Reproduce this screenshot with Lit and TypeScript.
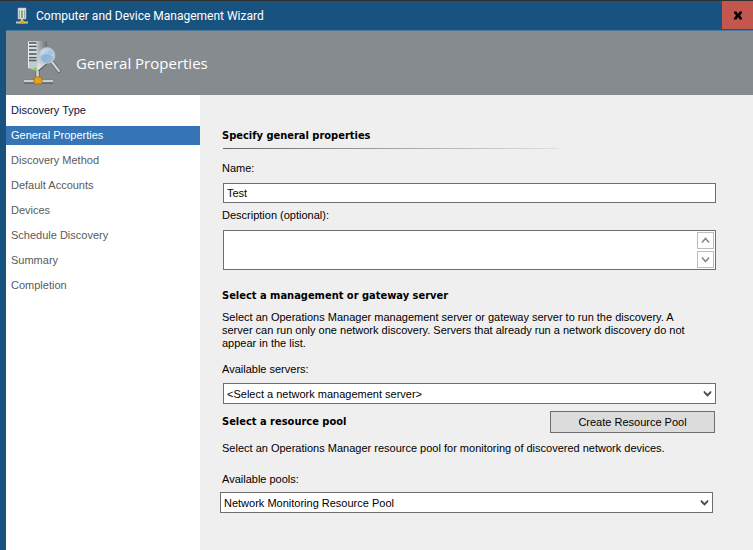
import { LitElement, html, css, svg } from "lit";
import { customElement, state } from "lit/decorators.js";

const steps = [
  "Discovery Type",
  "General Properties",
  "Discovery Method",
  "Default Accounts",
  "Devices",
  "Schedule Discovery",
  "Summary",
  "Completion",
];

const chevron = svg`<path d="M1 2v2l3.500 3.500L8 4V2L4.500 5z" fill="#505050" stroke="#505050" stroke-width=".5"/>`;

@customElement("app-root")
export class AppRoot extends LitElement {
  @state() private current = 1;

  static styles = css`
    :host {
      display: flex;
      flex-direction: column;
      min-height: 100vh;
      box-sizing: border-box;
      background: #18527f;
      color: #000;
      font: 11px/16px "Liberation Sans", Arial, sans-serif;
    }
    *, *::before { box-sizing: border-box; }
    .titlebar {
      display: flex;
      height: 30px;
      border-top: 1px solid #30302f;
    }
    .caption {
      display: flex;
      flex: 1;
      align-items: center;
      gap: 7px;
      padding-left: 14px;
      color: #fff;
      font: 12px/16px Roboto, sans-serif;
    }
    .close {
      display: grid;
      place-items: center;
      width: 32px;
      padding: 0;
      border: 0;
      border-left: 1px solid #5b3c48;
      border-bottom: 1px solid #5b3c48;
      background: #c3574e;
    }
    .window {
      display: flex;
      flex: 1;
      flex-direction: column;
      margin-left: 6px;
      border-top: 1px solid #4c779b;
    }
    .banner {
      display: flex;
      align-items: center;
      gap: 12px;
      height: 64px;
      padding-left: 14px;
      background: #868b8f;
      color: #fff;
    }
    .banner h1 {
      margin: 0;
      font: 15px/24px "Open Sans", sans-serif;
    }
    .columns { display: flex; flex: 1; }
    nav {
      display: flex;
      flex-direction: column;
      gap: 6px;
      width: 194px;
      padding-top: 6px;
      background: #fff;
    }
    nav a {
      padding-left: 5px;
      line-height: 19px;
      color: #5a5a5a;
      text-decoration: none;
    }
    nav a.done { color: #10103c; }
    nav a.current { background: #3575b5; color: #fff; }
    form {
      flex: 1;
      min-width: 0;
      padding: 33px 37px 32px 22px;
      background: #efefef;
    }
    h2 {
      margin: 0;
      font: bold 11px/16px "DejaVu Sans Condensed", "DejaVu Sans", sans-serif;
    }
    .rule {
      width: 68%;
      height: 1px;
      margin: 4px 0 11px 1px;
      background: linear-gradient(90deg, #666, #e0e0e0);
    }
    label { display: block; }
    p { margin: 0; }
    .name-label { margin-bottom: 7px; }
    .box {
      width: 100%;
      border: 1px solid #6e6e70;
      border-radius: 0;
      background: #fff;
      color: #000;
      font: inherit;
      outline: 0;
    }
    .field { display: flex; margin-left: 1px; }
    .name { height: 20px; padding: 0 3px; }
    .description-label { margin: 4px 0 7px; }
    .memo { display: flex; height: 40px; padding: 1px; }
    .memo textarea {
      flex: 1;
      min-width: 0;
      padding: 2px;
      border: 0;
      outline: 0;
      background: none;
      font: inherit;
      resize: none;
      overflow: hidden;
    }
    .spin {
      display: flex;
      flex-direction: column;
      justify-content: space-between;
      width: 17px;
    }
    .spin button {
      display: grid;
      place-items: center;
      height: 17px;
      padding: 0;
      border: 1px solid #bdbdbd;
      background: #fff;
    }
    .server-heading { margin: 18px 0 7px; }
    .server-text { max-width: 484px; line-height: 13px; }
    .servers-label { margin: 11px 0 6px; }
    .combo { display: grid; flex: 1; align-items: center; }
    .combo select {
      grid-area: 1 / 1;
      height: 21px;
      padding: 0 20px 0 3px;
      appearance: none;
    }
    .combo svg {
      grid-area: 1 / 1;
      justify-self: end;
      margin-right: 4px;
      pointer-events: none;
    }
    .pool-row {
      display: flex;
      align-items: center;
      justify-content: space-between;
      margin: 7px 1px 7px 0;
    }
    .create {
      width: 165px;
      height: 22px;
      padding: 0;
      border: 1px solid #6e6e70;
      background: #dcdcdc;
      color: #000;
      font: inherit;
    }
    .pools-label { margin: 15px 0 5px; }
    .pools { margin: 0 3px 0 -2px; }
  `;

  private combo(id: string, text: string) {
    return html`<div class="combo">
      <select class="box" id=${id}><option>${text}</option></select>
      <svg width="9" height="9" viewBox="0 0 9 9">${chevron}</svg>
    </div>`;
  }

  render() {
    return html`
      <header class="titlebar">
        <div class="caption">
          <svg width="15" height="18" viewBox="0 0 15 18">
            <path d="M4 1h8v11H4z" fill="#e4e7e8" stroke="#9daab1" stroke-width=".6"/>
            <path d="M5.500 3v8M10.500 3v8" stroke="#a1a7a9"/>
            <path d="M6.500 5 8 2.500 9.500 5zM7 5h2v6H7z" fill="#78ad72"/>
            <path d="M7 12h2v3H7z" fill="#bcc6ca"/>
            <path d="M2 15.500h12" stroke="#bfc5c8" stroke-width="2"/>
            <path d="M6 13.500h4l1 3H5z" fill="#eba718"/>
          </svg>
          <span>Computer and Device Management Wizard</span>
        </div>
        <button class="close" aria-label="Close">
          <svg width="10" height="9" viewBox="0 0 10 9">
            <path d="M1 .500h2.500L5 3 6.500.500H9V2L7 4.500 9 7v1.500H6.500L5 6 3.500 8.500H1V7l2-2.500L1 2z" fill="#000"/>
          </svg>
        </button>
      </header>
      <div class="window">
        <div class="banner">
          <svg width="44" height="48" viewBox="0 0 44 48">
            <defs>
              <linearGradient id="side" x2="1" y2=".4"><stop stop-color="#b9bfc1"/><stop offset="1" stop-color="#5f6669"/></linearGradient>
              <linearGradient id="glow" x2="0" y2="1"><stop stop-color="#dfe3e4" stop-opacity="0"/><stop offset="1" stop-color="#f1f3f3"/></linearGradient>
              <linearGradient id="lens" x2="1" y2="1"><stop stop-color="#e7f1fa"/><stop offset=".5" stop-color="#a3bfdc"/><stop offset="1" stop-color="#d2e3f2"/></linearGradient>
            </defs>
            <path d="M17 2h10v22l-10 8z" fill="url(#side)"/>
            <path d="M17 6h10v18l-10 8z" fill="url(#glow)"/>
            <path d="M8 2h9.500v30L8 29z" fill="#c3cace"/>
            <path d="M8.500 3v26" stroke="#e9edef"/>
            <path d="M9 4h7.500M9 7.500h7.500M9 11h7.500M9 15h7.500M9 18.500h7.500M9 21.500h7.500" stroke="#4d5c67" stroke-width="1.500"/>
            <path d="M9 5.500h7.500M9 9h7.500M9 13h7.500M9 17h7.500" stroke="#f0f3f4"/>
            <path d="M18 32.500 28 24" stroke="#4f5558"/>
            <circle cx="15" cy="30" r="1.500" fill="#67df28"/>
            <path d="m32 23 7 9" stroke="#666a6f" stroke-width="4" stroke-linecap="round"/>
            <path d="m32 23 7 9" stroke="#d0d0d8" stroke-width="2.200" stroke-linecap="round"/>
            <circle cx="27" cy="16.500" r="7.500" fill="url(#lens)" stroke="#bccbd9" stroke-width="1.500"/>
            <path d="M20.500 17.500c4-4 8-2 13 0a6.500 6.500 0 0 1-13 0" fill="#7ba3ce" opacity=".5"/>
            <path d="M17.500 32v7" stroke="#5b6164" stroke-width="4"/>
            <path d="M17.500 32v7" stroke="#d6dadc" stroke-width="2.500"/>
            <path d="M4 42.500h29" stroke="#5a6064" stroke-width="4.500"/>
            <path d="M4 42h29" stroke="#c8ccce" stroke-width="2.500"/>
            <path d="M15 38h6l1 2v5h-8v-5z" fill="#e4a313" stroke="#9c6a0c" stroke-width=".8"/>
          </svg>
          <h1>General Properties</h1>
        </div>
        <div class="columns">
          <nav aria-label="Steps">
            ${steps.map(
              (s, i) => html`<a
                href="#"
                class=${i === this.current ? "current" : i < this.current ? "done" : ""}
                >${s}</a
              >`
            )}
          </nav>
          <form>
            <h2>Specify general properties</h2>
            <div class="rule"></div>
            <label class="name-label" for="name">Name:</label>
            <div class="field"><input class="box name" id="name" type="text" .value=${"Test"} /></div>
            <label class="description-label" for="description">Description (optional):</label>
            <div class="field">
              <div class="box memo">
                <textarea id="description"></textarea>
                <div class="spin">
                  <button type="button" aria-label="Scroll up">
                    <svg width="9" height="7" viewBox="0 0 9 7"><path d="m1 5.500 3.500-4 3.500 4" fill="none" stroke="#858585" stroke-width="1.500"/></svg>
                  </button>
                  <button type="button" aria-label="Scroll down">
                    <svg width="9" height="7" viewBox="0 0 9 7"><path d="m1 1.500 3.500 4 3.500-4" fill="none" stroke="#858585" stroke-width="1.500"/></svg>
                  </button>
                </div>
              </div>
            </div>
            <h2 class="server-heading">Select a management or gateway server</h2>
            <p class="server-text">
              Select an Operations Manager management server or gateway server to run the discovery. A
              server can run only one network discovery. Servers that already run a network discovery do
              not appear in the list.
            </p>
            <label class="servers-label" for="servers">Available servers:</label>
            <div class="field">${this.combo("servers", "<Select a network management server>")}</div>
            <div class="pool-row">
              <h2>Select a resource pool</h2>
              <button class="create" type="button">Create Resource Pool</button>
            </div>
            <p>Select an Operations Manager resource pool for monitoring of discovered network devices.</p>
            <label class="pools-label" for="pools">Available pools:</label>
            <div class="field pools">${this.combo("pools", "Network Monitoring Resource Pool")}</div>
          </form>
        </div>
      </div>
    `;
  }
}
